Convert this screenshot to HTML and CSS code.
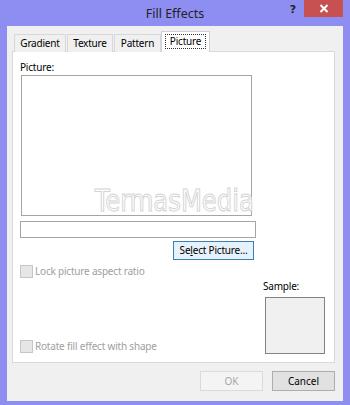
FILE: index.html
```html
<!DOCTYPE html>
<html lang="en">
<head>
	<meta charset="UTF-8">
	<title>Fill Effects</title>
	<link rel="stylesheet" href="styles.css">
</head>
<body>
	<div class="window">
		<div class="titlebar">
			<span></span>
			<span class="title">Fill Effects</span>
			<span class="controls">
				<span class="help">?</span>
				<span class="close">
					<svg width="10" height="9" viewBox="0 0 10 9"><path d="M1.5 1 L8.5 8 M8.5 1 L1.5 8" stroke="#fff" stroke-width="2"/></svg>
				</span>
			</span>
		</div>
		<div class="client">
			<ul class="tabs">
				<li class="tab tab_gradient">Gradient</li>
				<li class="tab tab_texture">Texture</li>
				<li class="tab tab_pattern">Pattern</li>
				<li class="tab active"><span class="focus">Picture</span></li>
			</ul>
			<div class="panel">
				<div class="label">Picture:</div>
				<div class="picture_box"></div>
				<div class="path_field"></div>
				<div class="select_row">
					<button type="button" class="select_btn">Se<u>l</u>ect Picture...</button>
				</div>
				<div class="bottom">
					<div class="checks">
						<label class="check"><span class="box"></span>Lock picture aspect ratio</label>
						<label class="check"><span class="box"></span>Rotate fill effect with shape</label>
					</div>
					<div class="sample">
						<div class="sample_label">Sample:</div>
						<div class="sample_box"></div>
					</div>
				</div>
				<div class="watermark">TermasMedia</div>
			</div>
			<div class="footer">
				<button type="button" class="btn disabled">OK</button>
				<button type="button" class="btn">Cancel</button>
			</div>
		</div>
	</div>
</body>
</html>
```

FILE: styles.css
```css
*{
	margin: 0;
	padding: 0;
	box-sizing: border-box;
}
body{
	font-family: "Noto Sans", "Open Sans", sans-serif;
	font-size: 10px;
	letter-spacing: -0.2px;
	color: #000;
}
.window{
	width: 350px;
	height: 405px;
	background-color: #8e8ef2;
	display: flex;
	flex-direction: column;
}
.titlebar{
	height: 26px;
	display: grid;
	grid-template-columns: 1fr auto 1fr;
	align-items: start;
}
.title{
	font-size: 12.5px;
	letter-spacing: 0;
	line-height: 27px;
	color: #222;
}
.controls{
	display: flex;
	justify-content: flex-end;
	align-items: flex-start;
	padding-right: 7px;
}
.help{
	font-family: "DejaVu Sans", sans-serif;
	font-weight: bold;
	font-size: 11px;
	line-height: 19px;
	color: #222;
	margin-right: 8px;
}
.close{
	width: 39px;
	height: 17px;
	background-color: #c75050;
	display: flex;
	align-items: center;
	justify-content: center;
}
.client{
	margin: 0 7px;
	height: 375px;
	background-color: #f0f0f0;
	padding: 6px 8px 0 5px;
}
.tabs{
	list-style: none;
	display: flex;
	align-items: flex-end;
	padding-left: 2px;
	height: 20px;
	position: relative;
	z-index: 1;
	margin-bottom: -1px;
}
.tab{
	height: 18px;
	line-height: 17px;
	text-align: center;
	border: 1px solid #d9d9d9;
	border-bottom: none;
	background-color: #f0f0f0;
	margin-right: 1px;
	color: #000;
}
.tab_gradient{
	width: 52px;
}
.tab_texture{
	width: 46px;
}
.tab_pattern{
	width: 47px;
}
.tab.active{
	width: 49px;
	height: 21px;
	background-color: #fff;
	padding: 2px 3px 0;
	margin-left: -1px;
	border-color: #d0d0d0;
}
.focus{
	display: block;
	border: 1px dotted #333;
	line-height: 13px;
}
.panel{
	position: relative;
	height: 312px;
	background-color: #fff;
	border: 1px solid #d9d9d9;
	padding: 7px 6px 8px 7px;
	display: flex;
	flex-direction: column;
}
.label{
	line-height: 16px;
}
.picture_box{
	width: 231px;
	height: 141px;
	margin-left: 1px;
	border: 1px solid #a5a5a5;
	background-color: #fff;
}
.path_field{
	width: 236px;
	height: 17px;
	margin-top: 5px;
	border: 1px solid #a5a5a5;
}
.select_row{
	width: 234px;
	display: flex;
	justify-content: flex-end;
	margin-top: 3px;
}
.select_btn{
	font-family: inherit;
	font-size: 10px;
	letter-spacing: -0.2px;
	width: 81px;
	height: 19px;
	line-height: 15px;
	background-color: #e5f1fb;
	border: 1px solid #3c7fb1;
	color: #000;
	white-space: nowrap;
}
.select_btn u{
	text-decoration-thickness: 1px;
}
.bottom{
	flex: 1;
	display: flex;
	margin-top: 4px;
}
.checks{
	flex: 1;
	display: flex;
	flex-direction: column;
	justify-content: space-between;
}
.check{
	display: flex;
	align-items: center;
	color: #a0a0a0;
	line-height: 15px;
}
.box{
	width: 13px;
	height: 13px;
	border: 1px solid #c6c6c6;
	background-color: #e6e6e6;
	margin-right: 2px;
}
.sample{
	display: flex;
	flex-direction: column;
	justify-content: flex-end;
	width: 61px;
	margin-right: 2px;
}
.sample_label{
	line-height: 15px;
	margin-bottom: 3px;
	margin-left: -2px;
}
.sample_box{
	width: 60px;
	height: 57px;
	border: 1px solid #828282;
	background-color: #f0f0f0;
}
.watermark{
	position: absolute;
	left: 82px;
	top: 129px;
	font-family: "DejaVu Sans Condensed", "DejaVu Sans", sans-serif;
	font-size: 30px;
	line-height: 40px;
	letter-spacing: 0;
	color: #fff;
	-webkit-text-stroke: 1px #d4d4d4;
	transform: scaleX(0.9);
	transform-origin: left top;
	pointer-events: none;
}
.footer{
	display: flex;
	justify-content: flex-end;
	gap: 9px;
	margin-top: 8px;
}
.btn{
	font-family: inherit;
	font-size: 10px;
	letter-spacing: 0;
	width: 63px;
	height: 20px;
	background-color: #e1e1e1;
	border: 1px solid #adadad;
	color: #000;
}
.btn.disabled{
	background-color: #f4f4f4;
	border-color: #dadada;
	color: #a8a8a8;
}
```
